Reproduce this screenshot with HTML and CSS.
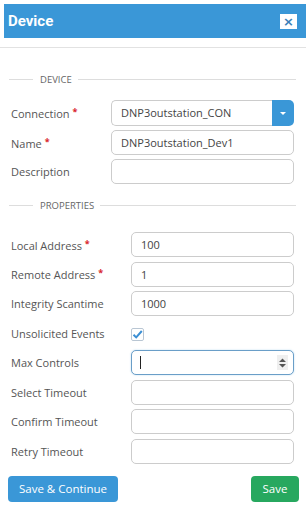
FILE: index.html
```html
<!DOCTYPE html>
<html lang="en">
<head>
  <meta charset="UTF-8" />
  <meta name="viewport" content="width=device-width, initial-scale=1.0" />
  <title>Device</title>
  <link rel="stylesheet" href="styles.css">
</head>
<body>
  <div class="modal">
    <div class="modal-header">
      <span class="title">Device</span>
      <span class="close">&times;</span>
    </div>
    <div class="divider"></div>

    <div class="modal-body">
      <div class="legend"><span>DEVICE</span></div>
      <div class="form device">
        <label>Connection <b class="req">*</b></label>
        <div class="select">
          <div class="field">DNP3outstation_CON</div>
          <span class="caret-btn"><i></i></span>
        </div>

        <label>Name <b class="req">*</b></label>
        <div class="field">DNP3outstation_Dev1</div>

        <label>Description</label>
        <div class="field"></div>
      </div>

      <div class="legend props"><span>PROPERTIES</span></div>
      <div class="form properties">
        <label>Local Address <b class="req">*</b></label>
        <div class="field">100</div>

        <label>Remote Address <b class="req">*</b></label>
        <div class="field">1</div>

        <label>Integrity Scantime</label>
        <div class="field">1000</div>

        <label>Unsolicited Events</label>
        <div class="check-cell">
          <svg class="check" width="13" height="13" viewBox="0 0 13 13">
            <rect x="0.5" y="0.5" width="12" height="12" rx="1.5" fill="#fff" stroke="#b9c6d3" />
            <path d="M2.5 6.8 L5.2 9.4 L10.8 3" fill="none" stroke="#3b8fd4" stroke-width="2" />
          </svg>
        </div>

        <label>Max Controls</label>
        <div class="field focus">
          <span class="cursor"></span>
          <span class="spin">
            <svg width="9" height="12" viewBox="0 0 9 12">
              <path d="M4.5 1.5 L8 5 L1 5 Z M1 7 L8 7 L4.5 10.5 Z" fill="#555" />
            </svg>
          </span>
        </div>

        <label>Select Timeout</label>
        <div class="field"></div>

        <label>Confirm Timeout</label>
        <div class="field"></div>

        <label>Retry Timeout</label>
        <div class="field"></div>
      </div>
    </div>

    <div class="modal-footer">
      <a class="btn btn-blue">Save &amp; Continue</a>
      <a class="btn btn-green">Save</a>
    </div>
  </div>
</body>
</html>
```

FILE: styles.css
```css
html, body {
  margin: 0;
  padding: 0;
}

body {
  font-family: 'Open Sans', 'Noto Sans', sans-serif;
  background: #fff;
  color: #555;
  width: 308px;
  height: 510px;
  overflow: hidden;
}

.modal-header {
  margin: 4px 2px 0 4px;
  height: 34px;
  background: #3a97d7;
  display: flex;
  align-items: center;
  justify-content: space-between;
  padding: 0 9px 0 4px;
}

.title {
  font-family: Roboto, 'Liberation Sans', sans-serif;
  font-weight: bold;
  font-size: 15px;
  color: #fff;
}

.close {
  width: 17px;
  height: 15px;
  background: #fff;
  color: #3a7fb8;
  font-family: 'DejaVu Sans', sans-serif;
  font-weight: bold;
  font-size: 13px;
  line-height: 15px;
  text-align: center;
}

.divider {
  height: 1px;
  background: #e2e2e2;
  margin: 9px 2px 0 0;
}

.modal-body {
  padding: 0 14px 0 9px;
}

.legend {
  display: flex;
  align-items: center;
  height: 14px;
  margin-top: 24px;
  font-size: 9.5px;
  color: #666;
}

.legend::before {
  content: "";
  width: 24px;
  height: 1px;
  background: #ddd;
}

.legend::after {
  content: "";
  flex: 1;
  height: 1px;
  background: #ddd;
  margin-right: -2px;
}

.legend span {
  padding: 0 6px 0 7px;
}

.legend.props {
  margin-top: 14px;
}

.form {
  display: grid;
  align-items: center;
  margin-left: 2px;
  row-gap: 4px;
}

.form.device {
  grid-template-columns: 100px 1fr;
  margin-top: 14px;
}

.form.properties {
  grid-template-columns: 120px 1fr;
  margin-top: 20px;
  row-gap: 4.5px;
}

label {
  font-size: 11px;
  color: #555;
  white-space: nowrap;
}

.req {
  color: #d9262c;
  font-size: 9px;
  vertical-align: 3px;
}

.field {
  position: relative;
  height: 25px;
  box-sizing: border-box;
  border: 1px solid #ccc;
  border-radius: 5px;
  padding: 0 9px;
  font-size: 11px;
  line-height: 23px;
  color: #444;
  background: #fff;
}

.select {
  display: flex;
  height: 26px;
}

.select .field {
  flex: 1;
  height: 26px;
  line-height: 24px;
  border-right: none;
  border-radius: 5px 0 0 5px;
}

.caret-btn {
  width: 22px;
  background: #3a97d7;
  border-radius: 0 5px 5px 0;
  display: flex;
  align-items: center;
  justify-content: center;
}

.caret-btn i {
  width: 0;
  height: 0;
  border-left: 3px solid transparent;
  border-right: 3px solid transparent;
  border-top: 3px solid #fff;
}

.check-cell {
  height: 25px;
  display: flex;
  align-items: center;
  padding-top: 2px;
  box-sizing: border-box;
}

.check {
  display: block;
}

.field.focus {
  border-color: #6a9ec8;
  box-shadow: 0 0 2px rgba(58, 151, 215, 0.35);
}

.cursor {
  position: absolute;
  left: 8px;
  top: 5px;
  width: 1px;
  height: 13px;
  background: #222;
}

.spin {
  position: absolute;
  right: 5px;
  top: 4px;
  width: 11px;
  height: 15px;
  background: #efefef;
  display: flex;
  align-items: center;
  justify-content: center;
}

.modal-footer {
  display: flex;
  justify-content: space-between;
  padding: 0 9px 0 8px;
  margin-top: 12px;
}

.btn {
  display: inline-block;
  height: 26px;
  line-height: 26px;
  border-radius: 4px;
  font-size: 11.5px;
  color: #fff;
  text-align: center;
}

.btn-blue {
  width: 110px;
  background: #3a97d7;
}

.btn-green {
  width: 48px;
  background: #27a85f;
}
```
